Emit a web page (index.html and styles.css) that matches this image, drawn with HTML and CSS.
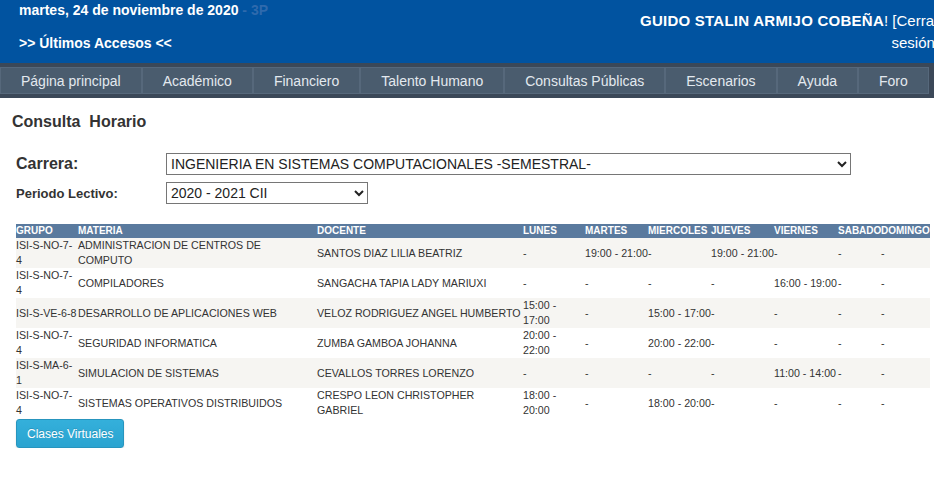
FILE: index.html
```html
<!DOCTYPE html>
<html lang="es">
<head>
<meta charset="utf-8">
<title>Consulta Horario</title>
<link rel="stylesheet" href="styles.css">
</head>
<body>
<header class="top">
  <div class="top-left">
    <div class="date">martes, 24 de noviembre de 2020 <span class="term">- 3P</span></div>
    <div class="recent">&gt;&gt; Últimos Accesos &lt;&lt;</div>
  </div>
  <div class="user"><b class="user-name">GUIDO STALIN ARMIJO COBEÑA</b>! [Cerrar sesión]</div>
</header>
<nav class="menu">
  <a class="menu-item" href="#">Página principal</a>
  <a class="menu-item" href="#">Académico</a>
  <a class="menu-item" href="#">Financiero</a>
  <a class="menu-item" href="#">Talento Humano</a>
  <a class="menu-item" href="#">Consultas Públicas</a>
  <a class="menu-item" href="#">Escenarios</a>
  <a class="menu-item" href="#">Ayuda</a>
  <a class="menu-item" href="#">Foro</a>
</nav>
<main class="content">
  <h1 class="title">Consulta&nbsp; Horario</h1>
  <form class="filters">
    <label class="lbl lbl-lg" for="carrera">Carrera:</label>
    <select class="sel sel-wide" id="carrera"><option>INGENIERIA EN SISTEMAS COMPUTACIONALES -SEMESTRAL-</option></select>
    <label class="lbl" for="periodo">Periodo Lectivo:</label>
    <select class="sel sel-narrow" id="periodo"><option>2020 - 2021 CII</option></select>
  </form>
  <table class="schedule">
    <colgroup>
      <col class="c-grupo"><col class="c-materia"><col class="c-docente">
      <col class="c-lun"><col class="c-mar"><col class="c-mie"><col class="c-jue">
      <col class="c-vie"><col class="c-sab"><col class="c-dom">
    </colgroup>
    <thead>
      <tr><th>GRUPO</th><th>MATERIA</th><th>DOCENTE</th><th>LUNES</th><th>MARTES</th><th>MIERCOLES</th><th>JUEVES</th><th>VIERNES</th><th>SABADO</th><th>DOMINGO</th></tr>
    </thead>
    <tbody>
      <tr><td>ISI-S-NO-7-4</td><td>ADMINISTRACION DE CENTROS DE COMPUTO</td><td>SANTOS DIAZ LILIA BEATRIZ</td><td>-</td><td>19:00 - 21:00</td><td>-</td><td>19:00 - 21:00</td><td>-</td><td>-</td><td>-</td></tr>
      <tr><td>ISI-S-NO-7-4</td><td>COMPILADORES</td><td>SANGACHA TAPIA LADY MARIUXI</td><td>-</td><td>-</td><td>-</td><td>-</td><td>16:00 - 19:00</td><td>-</td><td>-</td></tr>
      <tr><td>ISI-S-VE-6-8</td><td>DESARROLLO DE APLICACIONES WEB</td><td>VELOZ RODRIGUEZ ANGEL HUMBERTO</td><td>15:00 - 17:00</td><td>-</td><td>15:00 - 17:00</td><td>-</td><td>-</td><td>-</td><td>-</td></tr>
      <tr><td>ISI-S-NO-7-4</td><td>SEGURIDAD INFORMATICA</td><td>ZUMBA GAMBOA JOHANNA</td><td>20:00 - 22:00</td><td>-</td><td>20:00 - 22:00</td><td>-</td><td>-</td><td>-</td><td>-</td></tr>
      <tr><td>ISI-S-MA-6-1</td><td>SIMULACION DE SISTEMAS</td><td>CEVALLOS TORRES LORENZO</td><td>-</td><td>-</td><td>-</td><td>-</td><td>11:00 - 14:00</td><td>-</td><td>-</td></tr>
      <tr><td>ISI-S-NO-7-4</td><td>SISTEMAS OPERATIVOS DISTRIBUIDOS</td><td>CRESPO LEON CHRISTOPHER GABRIEL</td><td>18:00 - 20:00</td><td>-</td><td>18:00 - 20:00</td><td>-</td><td>-</td><td>-</td><td>-</td></tr>
    </tbody>
  </table>
  <button class="btn" type="button">Clases Virtuales</button>
</main>
</body>
</html>
```
FILE: styles.css
```css
* { box-sizing: border-box; }

body {
  margin: 0;
  font-family: "Liberation Sans", Arial, sans-serif;
  color: #333;
  background: #fff;
}

.top {
  background: #0153a0;
  height: 63px;
  display: flex;
  justify-content: space-between;
  overflow: hidden;
  color: #fff;
}

.top-left {
  padding-left: 19px;
  font-weight: bold;
  font-size: 14px;
}

.date { line-height: 20px; }

.term { color: #2f6aad; font-weight: bold; }

.recent {
  line-height: 20px;
  margin-top: 13px;
}

.user {
  flex: none;
  width: 304px;
  margin-right: -5px;
  padding-top: 10px;
  text-align: right;
  font-size: 15px;
  line-height: 22px;
}

.user-name { letter-spacing: 0.25px; }

.menu {
  display: flex;
  background: #3b4858;
  padding: 4px 0;
}

.menu-item {
  border: 1px solid #56687b;
  background: #4a5c6e;
  color: #e3e9ef;
  font-size: 14px;
  line-height: 24px;
  padding: 1px 20px 0;
  text-decoration: none;
}

.content { padding-left: 16px; }

.title {
  font-size: 16px;
  font-weight: bold;
  line-height: 20px;
  margin: 14px 0 0 -4px;
  color: #333;
}

.filters {
  display: grid;
  grid-template-columns: 150px auto;
  justify-content: start;
  justify-items: start;
  align-items: center;
  row-gap: 7px;
  margin-top: 21px;
}

.lbl {
  font-weight: bold;
  font-size: 13px;
  color: #333;
}

.lbl-lg { font-size: 16px; }

.sel {
  height: 22px;
  font-family: inherit;
  font-size: 14px;
  color: #222;
  background: #fff;
  border: 1px solid #767676;
  border-radius: 0;
  padding: 0;
}

.sel-wide { width: 685px; }
.sel-narrow { width: 202px; }

.schedule {
  margin-top: 20px;
  border-collapse: collapse;
  table-layout: fixed;
  width: 914px;
  font-size: 10.667px;
}

.c-grupo { width: 62px; }
.c-materia { width: 239px; }
.c-docente { width: 206px; }
.c-lun { width: 62px; }
.c-mar { width: 63px; }
.c-mie { width: 63px; }
.c-jue { width: 63px; }
.c-vie { width: 64px; }
.c-sab { width: 43px; }
.c-dom { width: 49px; }

.schedule th {
  background: #5a7a9e;
  color: #fff;
  font-size: 10px;
  font-weight: bold;
  text-align: left;
  padding: 0;
  height: 14px;
  line-height: 14px;
  white-space: nowrap;
}

.schedule td {
  padding: 0;
  height: 30px;
  line-height: 15px;
  vertical-align: middle;
  color: #333;
}

.schedule tbody tr:nth-child(odd) { background: #f6f5f2; }

.btn {
  display: block;
  margin-top: 1px;
  height: 29px;
  padding: 0 10px;
  font-family: inherit;
  font-size: 12px;
  color: #fff;
  background: linear-gradient(#34b0db, #2aa3d0);
  border: 1px solid #2795be;
  border-radius: 3px;
  text-shadow: 0 -1px 0 rgba(0, 0, 0, 0.15);
  box-shadow: 0 1px 2px rgba(0, 0, 0, 0.12);
}
```
